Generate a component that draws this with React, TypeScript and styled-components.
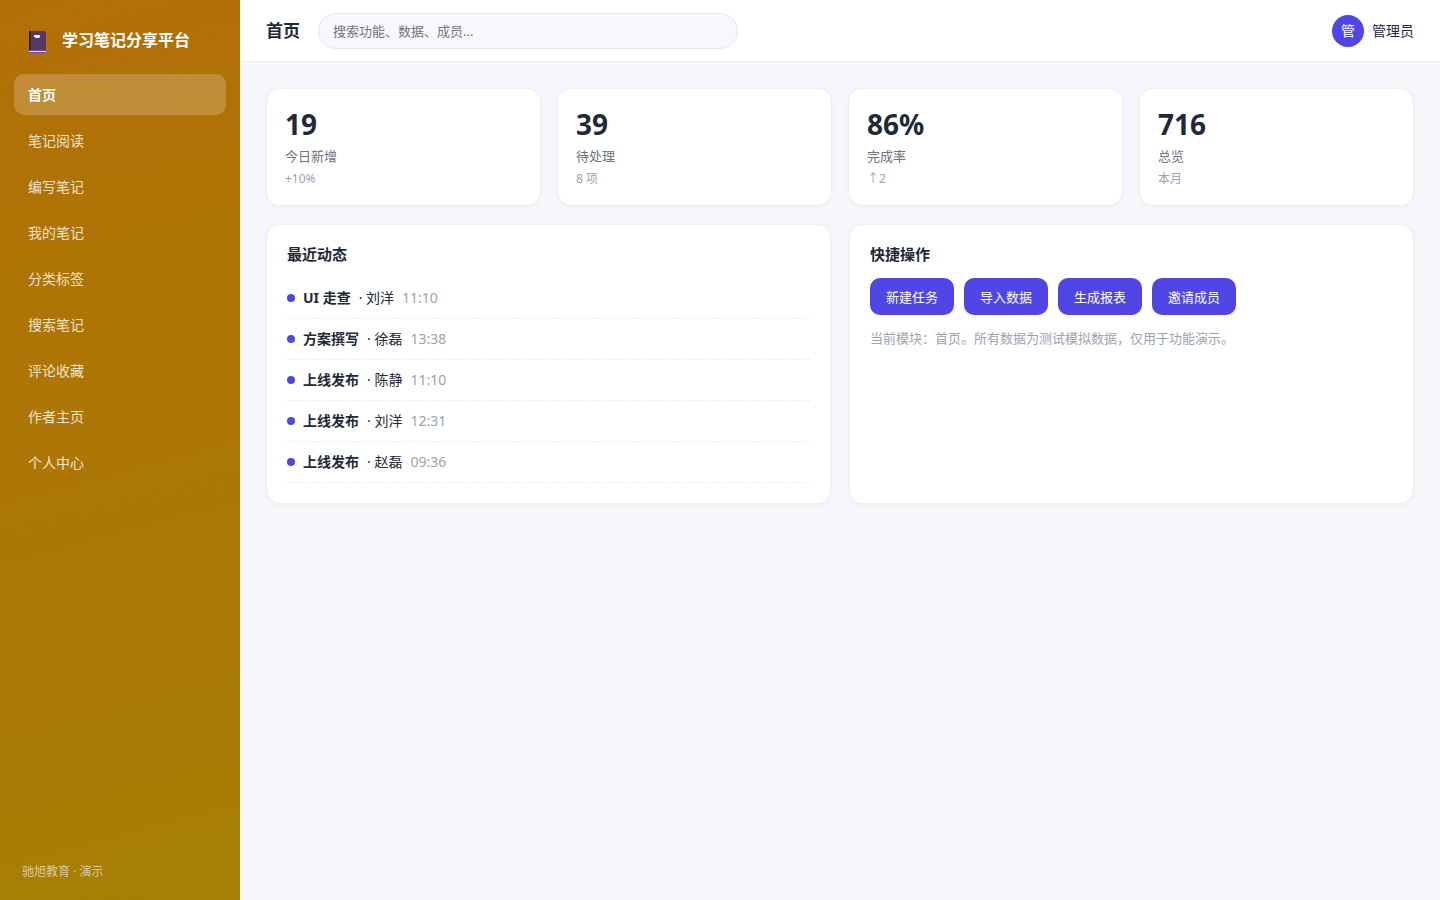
import React from "react";
import styled, { createGlobalStyle } from "styled-components";

const GlobalStyle = createGlobalStyle`
  *, *::before, *::after { box-sizing: border-box; }
  body {
    margin: 0;
    background: #f5f7fb;
    color: #1f2937;
    font-family: "Noto Sans", "Noto Sans CJK SC", sans-serif;
    font-size: 14px;
    line-height: 20px;
  }
  button, input { font-family: inherit; }
`;

const Layout = styled.div`
  display: flex;
  min-height: 100vh;
`;

const Sidebar = styled.aside`
  display: flex;
  flex-direction: column;
  flex: none;
  width: 240px;
  padding: 22px 14px 18px;
  background: linear-gradient(165deg, #b26f06, #a67f06);
  color: #fff;
`;

const Brand = styled.div`
  display: flex;
  align-items: center;
  gap: 15px;
  height: 36px;
  margin-bottom: 16px;
  padding: 0 15px;
  font-size: 16px;
  font-weight: 700;
  white-space: nowrap;

  svg { flex: none; margin-top: 4px; }
`;

const Nav = styled.nav`
  display: flex;
  flex-direction: column;
  gap: 5px;
`;

const NavLink = styled.a<{ $active?: boolean }>`
  padding: 11px 14px;
  border-radius: 10px;
  line-height: 19px;
  text-decoration: none;
  color: ${(p) => (p.$active ? "#fff" : "rgba(255, 255, 255, 0.82)")};
  font-weight: ${(p) => (p.$active ? 700 : 400)};
  background: ${(p) => (p.$active ? "rgba(255, 255, 255, 0.2)" : "transparent")};
`;

const SidebarFooter = styled.footer`
  margin-top: auto;
  padding: 0 8px;
  font-size: 12px;
  color: rgba(255, 255, 255, 0.6);
`;

const Main = styled.div`
  display: flex;
  flex-direction: column;
  flex: 1;
  min-width: 0;
`;

const Topbar = styled.header`
  display: flex;
  align-items: center;
  gap: 18px;
  height: 62px;
  padding: 0 26px;
  background: #fff;
  border-bottom: 1px solid #eceef3;
`;

const PageTitle = styled.h1`
  margin: 0;
  font-size: 17px;
  line-height: 24px;
  white-space: nowrap;
`;

const Search = styled.input`
  width: 420px;
  min-width: 0;
  height: 36px;
  padding: 0 14px;
  border: 1px solid #e5e7ef;
  border-radius: 18px;
  background: #f7f8fc;
  font-size: 13px;

  &::placeholder { color: #757575; opacity: 1; }
`;

const User = styled.div`
  display: flex;
  align-items: center;
  gap: 8px;
  margin-left: auto;
  white-space: nowrap;
`;

const Avatar = styled.span`
  display: grid;
  place-items: center;
  width: 32px;
  height: 32px;
  border-radius: 50%;
  background: #4f46e5;
  color: #fff;
`;

const Content = styled.main`
  display: flex;
  flex-direction: column;
  gap: 18px;
  padding: 26px;
`;

const Stats = styled.section`
  display: grid;
  grid-template-columns: repeat(4, 1fr);
  gap: 16px;
`;

const Panels = styled.div`
  display: grid;
  grid-template-columns: repeat(2, 1fr);
  gap: 18px;
`;

const Card = styled.section`
  border: 1px solid #eef0f5;
  border-radius: 14px;
  background: #fff;
  box-shadow: 0 1px 4px rgba(31, 41, 55, 0.04);
`;

const StatCard = styled(Card)`
  padding: 18px;
`;

const StatValue = styled.div`
  font-size: 28px;
  font-weight: 700;
  line-height: 34px;
`;

const StatLabel = styled.div`
  margin-top: 6px;
  font-size: 13px;
  line-height: 19px;
  color: #6b7280;
`;

const StatHint = styled.div`
  margin-top: 4px;
  font-size: 12px;
  line-height: 17px;
  color: #9aa3b2;
`;

const Panel = styled(Card)`
  padding: 20px;
`;

const PanelTitle = styled.h2`
  margin: 0 0 14px;
  font-size: 15px;
  line-height: 19px;
`;

const Feed = styled.ul`
  margin: 0;
  padding: 0;
  list-style: none;
`;

const FeedItem = styled.li`
  display: flex;
  align-items: center;
  gap: 8px;
  padding: 10px 0;
  border-bottom: 1px dashed #eef0f4;

  &::before {
    content: "";
    width: 8px;
    height: 8px;
    border-radius: 50%;
    background: #4f46e5;
  }
`;

const Time = styled.time`
  color: #9aa3b2;
`;

const Actions = styled.div`
  display: flex;
  flex-wrap: wrap;
  gap: 10px;
`;

const ActionButton = styled.button`
  height: 37px;
  padding: 0 16px;
  border: 0;
  border-radius: 10px;
  background: #4f46e5;
  color: #fff;
  font-size: 13px;
  cursor: pointer;
`;

const Note = styled.p`
  margin: 14px 0 0;
  font-size: 13px;
  line-height: 19px;
  color: #9aa3b2;
`;

const NotebookIcon = () => (
  <svg width="18" height="23" viewBox="0 0 18 23" aria-hidden="true">
    <path d="M0 0h15.5L17 1.5V20H0z" fill="#553866" />
    <path d="M0 0h2v20H0z" fill="#35203f" />
    <path d="M5 4h6v1.5L10 7H6.5L5 5.5z" fill="#fff" />
    <path d="M0 19h17v3H0z" fill="#7447a0" />
    <path d="M0 20h17v1H0z" fill="#e4d8ee" />
  </svg>
);

const navItems = ["首页", "笔记阅读", "编写笔记", "我的笔记", "分类标签", "搜索笔记", "评论收藏", "作者主页", "个人中心"];

const stats = [
  { value: "19", label: "今日新增", hint: "+10%" },
  { value: "39", label: "待处理", hint: "8 项" },
  { value: "86%", label: "完成率", hint: "↑2" },
  { value: "716", label: "总览", hint: "本月" },
];

const feed = [
  { title: "UI 走查", who: "刘洋", time: "11:10" },
  { title: "方案撰写", who: "徐磊", time: "13:38" },
  { title: "上线发布", who: "陈静", time: "11:10" },
  { title: "上线发布", who: "刘洋", time: "12:31" },
  { title: "上线发布", who: "赵磊", time: "09:36" },
];

const actions = ["新建任务", "导入数据", "生成报表", "邀请成员"];

export default function App() {
  return (
    <>
      <GlobalStyle />
      <Layout>
        <Sidebar>
          <Brand>
            <NotebookIcon />
            学习笔记分享平台
          </Brand>
          <Nav>
            {navItems.map((item, i) => (
              <NavLink key={item} href="#" $active={i === 0} aria-current={i === 0 ? "page" : undefined}>
                {item}
              </NavLink>
            ))}
          </Nav>
          <SidebarFooter>驰旭教育 · 演示</SidebarFooter>
        </Sidebar>
        <Main>
          <Topbar>
            <PageTitle>首页</PageTitle>
            <Search type="search" aria-label="搜索" placeholder="搜索功能、数据、成员..." />
            <User>
              <Avatar>管</Avatar>
              <span>管理员</span>
            </User>
          </Topbar>
          <Content>
            <Stats>
              {stats.map((s) => (
                <StatCard key={s.label}>
                  <StatValue>{s.value}</StatValue>
                  <StatLabel>{s.label}</StatLabel>
                  <StatHint>{s.hint}</StatHint>
                </StatCard>
              ))}
            </Stats>
            <Panels>
              <Panel>
                <PanelTitle>最近动态</PanelTitle>
                <Feed>
                  {feed.map((f, i) => (
                    <FeedItem key={i}>
                      <strong>{f.title}</strong>
                      <span>· {f.who}</span>
                      <Time>{f.time}</Time>
                    </FeedItem>
                  ))}
                </Feed>
              </Panel>
              <Panel>
                <PanelTitle>快捷操作</PanelTitle>
                <Actions>
                  {actions.map((a) => (
                    <ActionButton key={a} type="button">{a}</ActionButton>
                  ))}
                </Actions>
                <Note>当前模块：首页。所有数据为测试模拟数据，仅用于功能演示。</Note>
              </Panel>
            </Panels>
          </Content>
        </Main>
      </Layout>
    </>
  );
}
